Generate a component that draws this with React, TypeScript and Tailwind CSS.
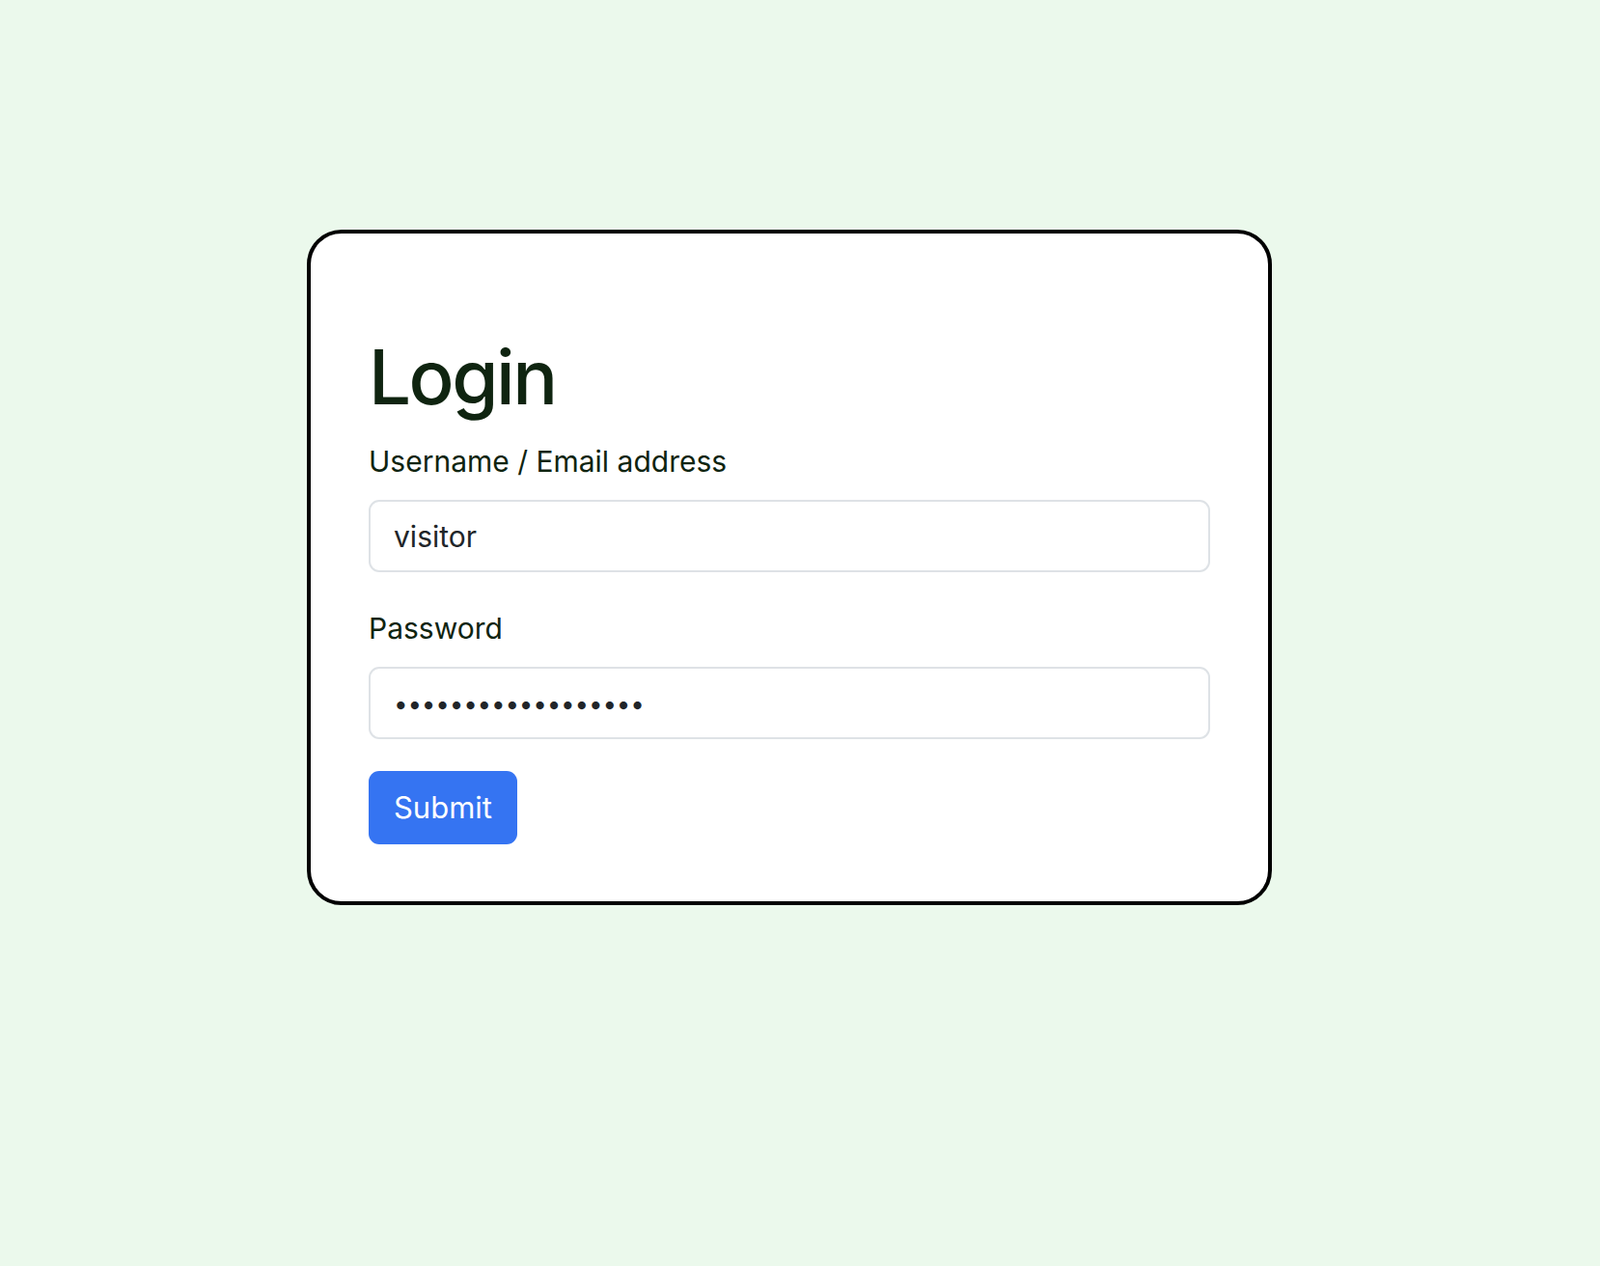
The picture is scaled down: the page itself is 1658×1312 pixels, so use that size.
import { useState } from 'react'

export default function App() {
  const [username, setUsername] = useState('visitor')
  const [password, setPassword] = useState('••••••••••••••••••')

  return (
    <div className="min-h-screen bg-[#ebf9ec] pt-[238px] pl-[318px] font-['Inter','Liberation_Sans',sans-serif]">
      <div className="w-[1000px] rounded-[36px] border-4 border-black bg-white px-[60px] pt-[101px] pb-[59px]">
        {/* 标题 */}
        <h1 className="text-[78px] leading-[96px] font-medium text-[#0f2410] tracking-[-2.5px]">Login</h1>

        <form onSubmit={e => e.preventDefault()}>
          <label className="mt-[21px] block text-[30px] leading-[37px] text-[#0f2410]">
            Username / Email address
          </label>
          <input
            value={username}
            onChange={e => setUsername(e.target.value)}
            className="mt-[21px] block h-[75px] w-full rounded-[11px] border-2 border-[#dee2e6] px-[24px] text-[30px] text-[#212529] outline-none"
          />

          <label className="mt-[40px] block text-[30px] leading-[37px] text-[#0f2410]">
            Password
          </label>
          <input
            type="password"
            value={password}
            onChange={e => setPassword(e.target.value)}
            className="mt-[21px] block h-[75px] w-full rounded-[11px] border-2 border-[#dee2e6] px-[24px] pt-[2px] text-[26px] tracking-[-0.2px] text-[#212529] outline-none"
          />

          <button
            type="submit"
            className="mt-[33px] flex h-[76px] w-[154px] items-center justify-center rounded-[11px] bg-[#3574f2] text-[31px] text-white"
          >
            Submit
          </button>
        </form>
      </div>
    </div>
  )
}
